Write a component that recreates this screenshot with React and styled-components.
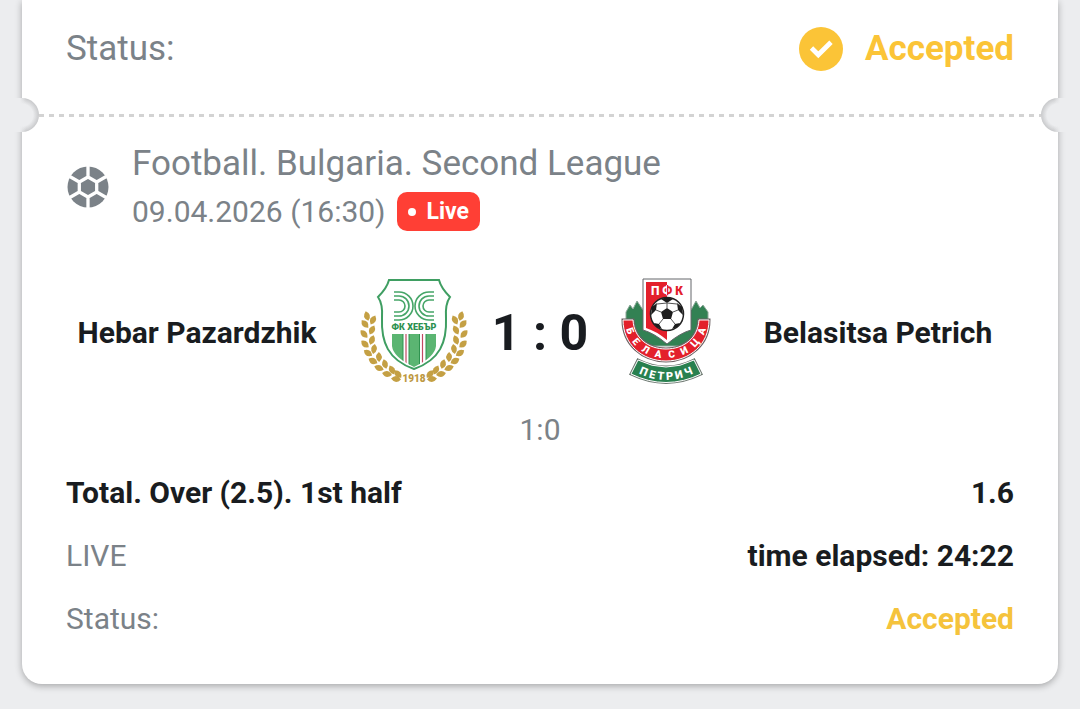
import styled, { createGlobalStyle } from "styled-components";

const App = () => {
  return (
    <>
      <GlobalStyle />
      <Ticket>
        <Summary>
          <SummaryLabel>Status:</SummaryLabel>
          <SummaryStatus>
            <CheckIcon />
            Accepted
          </SummaryStatus>
        </Summary>
        <Tear>
          <Notch $side="left" />
          <Dashes />
          <Notch $side="right" />
        </Tear>
        <Event>
          <EventHeader>
            <BallIcon />
            <div>
              <League>Football. Bulgaria. Second League</League>
              <Kickoff>
                <time dateTime="2026-04-09T16:30">09.04.2026 (16:30)</time>
                <LiveBadge>Live</LiveBadge>
              </Kickoff>
            </div>
          </EventHeader>
          <Match>
            <Team $side="home">Hebar Pazardzhik</Team>
            <HebarCrest />
            <Score>1 : 0</Score>
            <BelasitsaCrest />
            <Team $side="away">Belasitsa Petrich</Team>
          </Match>
          <Period>1:0</Period>
          <Row>
            <Value>Total. Over (2.5). 1st half</Value>
            <Value>1.6</Value>
          </Row>
          <Row>
            <Label>LIVE</Label>
            <Value>time elapsed: 24:22</Value>
          </Row>
          <Row>
            <Label>Status:</Label>
            <Value $accent>Accepted</Value>
          </Row>
        </Event>
      </Ticket>
    </>
  );
};

const CheckIcon = () => (
  <svg width="44" height="44" viewBox="0 0 44 44" aria-hidden="true">
    <circle cx="22" cy="22" r="22" fill="#fbc437" />
    <path d="M12.500 21l6.800 6.800L32 15.300" fill="none" stroke="#fff" strokeWidth="4.800" />
  </svg>
);

const BallIcon = () => (
  <svg width="44" height="44" viewBox="-22 -22 44 44" aria-hidden="true">
    <circle r="20.500" fill="#7b8288" />
    <path
      d="M0-10L8.700-5V5L0 10L-8.700 5V-5ZM0-10V-21M8.700-5L18.200-10.500M8.700 5L18.200 10.500M0 10V21M-8.700 5L-18.200 10.500M-8.700-5L-18.200-10.500"
      fill="none"
      stroke="#fff"
      strokeWidth="3.300"
    />
  </svg>
);

// x, y and angle of each leaf on the left branch, the right one is mirrored
const leaves = [
  [17, 46, 75],
  [15, 54, 48], [23, 50, 118],
  [14, 64, 48], [22, 60, 118],
  [15, 74, 42], [22, 70, 110],
  [18, 83, 35], [24, 79, 100],
  [23, 91, 28], [29, 87, 88],
  [29, 98, 20], [35, 94, 75],
  [37, 104, 12], [42, 100, 62],
  [46, 109, 5], [48, 104, 50],
];

const Branch = (props) => (
  <g fill="#c4a044" {...props}>
    {leaves.map(([x, y, angle]) => (
      <path
        key={`${x}-${y}`}
        d="M-5 0Q0-6 5 0Q0 6-5 0Z"
        transform={`translate(${x} ${y}) rotate(${angle})`}
      />
    ))}
  </g>
);

const HebarCrest = () => (
  <svg width="108" height="125" viewBox="10 0 108 125" role="img" aria-label="Hebar">
    <clipPath id="hebar-shield">
      <path d="M42 64H86V76Q85 87 64 97Q43 87 42 76Z" />
    </clipPath>
    <path
      d="M39 10H89Q91 18 100 27Q95 34 96 48C97 72 90 90 64 99C38 90 31 72 32 48Q33 34 28 27Q37 18 39 10Z"
      fill="#fff"
      stroke="#3f9e62"
      strokeWidth="2"
    />
    <g fill="none" stroke="#45a567" strokeWidth="1.600">
      <path d="M44 22H49A14 14 0 0 1 49 50H44M44 26H49A10 10 0 0 1 49 46H44M44 30H49A6 6 0 0 1 49 42H44" />
      <path d="M84 22H79A14 14 0 0 0 79 50H84M84 26H79A10 10 0 0 0 79 46H84M84 30H79A6 6 0 0 0 79 42H84" />
    </g>
    <CrestText x="64" y="60" $size={9} fill="#2c9150">
      ФК ХЕБЪР
    </CrestText>
    <g clipPath="url(#hebar-shield)">
      <path d="M42 64H53V100H42ZM59 64H69V100H59ZM76 64H86V100H76Z" fill="#5bb572" />
      <path d="M53 64V100M59 64V100M69.500 64V100M76 64V100" stroke="#2f9450" />
      <path d="M56 64V100M72.500 64V100" stroke="#c24863" strokeWidth="1.200" />
    </g>
    <Branch />
    <Branch transform="translate(128) scale(-1 1)" />
    <CrestText x="64" y="112" $size={10} fill="#bd9840">
      1918
    </CrestText>
  </svg>
);

const BelasitsaCrest = () => (
  <svg width="108" height="125" viewBox="2 0 108 125" role="img" aria-label="Belasitsa">
    <path
      d="M16 62V42L20 35L23 39L27 31L33 40H81L86 31L90 38L93 35L98 42V62L88 76H27Z"
      fill="#328153"
      stroke="#8ca798"
    />
    <path d="M33 9H81V60Q70 63 57 74Q44 63 33 60Z" fill="#fff" stroke="#64676a" />
    <path d="M36 12H57V70Q46 61 36 58Z" fill="#e3202b" />
    <clipPath id="shield-left">
      <path d="M36 12H57V30H36Z" />
    </clipPath>
    <CrestText x="57" y="25" $size={12} fill="#e3202b">
      П Ф К
    </CrestText>
    <CrestText x="57" y="25" $size={12} fill="#fff" clipPath="url(#shield-left)" aria-hidden="true">
      П Ф К
    </CrestText>
    <circle cx="57" cy="44" r="16.500" fill="#fff" stroke="#222" strokeWidth="1.500" />
    <g fill="#1c1c1c">
      <path d="M57 38L63 42L61 49H53L51 42Z" />
      <path d="M51 29Q57 26 63 29L57 33ZM42 37L47 33L46 40L41 45ZM72 37L67 33L68 40L73 45ZM44 53L49 54L52 59Q46 58 44 53ZM70 53L65 54L62 59Q68 58 70 53Z" />
    </g>
    <path
      d="M57 33V38M57 33L47 34M57 33L67 34M51 42L46 40M63 42L68 40M53 49L49 54M61 49L65 54"
      stroke="#555"
    />
    <path d={ribbon} fill="#e3202b" stroke="#6d6264" strokeWidth="3" />
    <path d={ribbon} fill="#e3202b" stroke="#fff" />
    <path id="belasitsa-arc" d="M15 51C16 73 34 88 56 88S96 73 97 51" fill="none" />
    <CrestText $size={10} fill="#fff">
      <textPath href="#belasitsa-arc" startOffset="50%">
        Б&nbsp;&nbsp; Е&nbsp;&nbsp; Л&nbsp;&nbsp; А&nbsp;&nbsp; С&nbsp;&nbsp; И&nbsp;&nbsp; Ц&nbsp;&nbsp; А
      </textPath>
    </CrestText>
    <path d={banner} fill="#28804f" stroke="#6c7770" strokeWidth="3" />
    <path d={banner} fill="#28804f" stroke="#fff" />
    <path id="petrich-arc" d="M24 101Q56 119 88 101" fill="none" />
    <CrestText $size={11} fill="#fff">
      <textPath href="#petrich-arc" startOffset="50%">
        П Е Т Р И Ч
      </textPath>
    </CrestText>
  </svg>
);

const ribbon = "M13 50H23C24 68 38 79 56 79S88 68 89 50H99C99 74 80 91 56 91S13 74 13 50Z";
const banner = "M28 90Q56 104 84 90L91 104Q56 121 21 104Z";

const GlobalStyle = createGlobalStyle`
  * {
    box-sizing: border-box;
  }
  body {
    margin: 0;
    background: #ecedef;
    color: #191c20;
    font-family: Roboto, "Liberation Sans", sans-serif;
    font-size: 30px;
    line-height: 36px;
  }
  svg {
    display: block;
    flex: none;
  }
`;

const Ticket = styled.main`
  margin: 0 22px 24px;
  background: #fff;
  border-radius: 0 0 20px 20px;
  box-shadow: 0 2px 7px rgba(0, 0, 0, 0.3);
`;

const Summary = styled.section`
  display: flex;
  align-items: center;
  justify-content: space-between;
  padding: 27px 44px 27px;
  font-size: 35px;
  line-height: 44px;
`;

const SummaryLabel = styled.span`
  color: #7b8288;
`;

const SummaryStatus = styled.span`
  display: flex;
  align-items: center;
  gap: 22px;
  color: #fbc437;
  font-weight: 700;
`;

const Tear = styled.div`
  display: flex;
  align-items: center;
  justify-content: space-between;
  height: 34px;
  margin: 0 -8px;
`;

const Notch = styled.div`
  flex: none;
  width: 25px;
  height: 34px;
  border-radius: ${({ $side }) => ($side === "left" ? "0 17px 17px 0" : "17px 0 0 17px")};
  background:
    linear-gradient(
      to ${({ $side }) => ($side === "left" ? "right" : "left")},
      #ecedef 6px,
      transparent 12px
    ),
    radial-gradient(
      circle at ${({ $side }) => ($side === "left" ? "8px" : "17px")} 17px,
      #ecedef 11px,
      #c8c9cb 17px
    );
`;

const Dashes = styled.div`
  flex: 1;
  height: 3px;
  background: repeating-linear-gradient(to right, #d3d3d3 0 5px, transparent 5px 10px);
`;

const Event = styled.section`
  padding: 10px 44px 34px;
`;

const EventHeader = styled.header`
  display: flex;
  align-items: center;
  gap: 22px;
  color: #7b8288;
`;

const League = styled.div`
  font-size: 35px;
  line-height: 44px;
`;

const Kickoff = styled.div`
  display: flex;
  align-items: center;
  gap: 11px;
  padding-top: 6px;
`;

const LiveBadge = styled.span`
  display: flex;
  align-items: center;
  gap: 11px;
  height: 39px;
  padding: 0 11px;
  border-radius: 10px;
  background: #ff3f35;
  color: #fff;
  font-size: 23px;
  font-weight: 700;

  &::before {
    content: "";
    width: 8px;
    height: 8px;
    border-radius: 50%;
    background: #fff;
  }
`;

const Match = styled.div`
  display: grid;
  grid-template-columns: 1fr 108px 144px 108px 1fr;
  align-items: center;
  justify-items: center;
  margin-top: 39px;
`;

const Team = styled.div`
  padding: ${({ $side }) => ($side === "home" ? "0 32px 0 0" : "0 0 0 22px")};
  font-weight: 700;
  text-align: center;
`;

const Score = styled.div`
  font-size: 50px;
  font-weight: 700;
  white-space: nowrap;
`;

const Period = styled.div`
  margin: 17px 0 13px;
  color: #7b8288;
  text-align: center;
`;

const Row = styled.div`
  display: flex;
  align-items: center;
  justify-content: space-between;
  height: 63px;
`;

const Label = styled.span`
  color: #7b8288;
`;

const Value = styled.span`
  color: ${({ $accent }) => ($accent ? "#f5c33c" : "inherit")};
  font-weight: 700;
`;

const CrestText = styled.text`
  font-size: ${({ $size }) => $size}px;
  font-weight: 900;
  text-anchor: middle;
`;

export default App;
